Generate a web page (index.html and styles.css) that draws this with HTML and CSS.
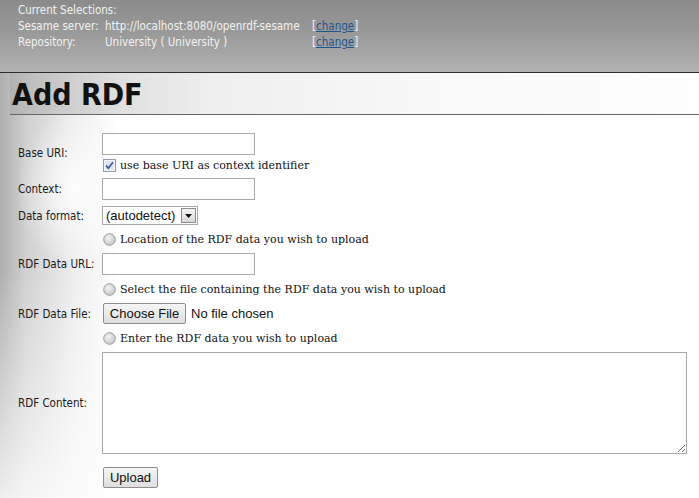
FILE: index.html
```html
<!DOCTYPE html>
<html>
<head>
    <meta charset="UTF-8">
    <title>Add RDF</title>
    <link rel="stylesheet" href="styles.css">
</head>
<body>
    <div class="header">
        <div class="selections">
            <div class="sel-title">Current Selections:</div>
            <div class="sel-label">Sesame server:</div>
            <div class="sel-value">http://localhost:8080/openrdf-sesame</div>
            <div class="sel-change">[<a href="#">change</a>]</div>
            <div class="sel-label">Repository:</div>
            <div class="sel-value">University ( University )</div>
            <div class="sel-change">[<a href="#">change</a>]</div>
        </div>
    </div>

    <div class="content">
        <h1 class="page-title">Add RDF</h1>

        <form class="upload-form">
            <div class="row row-base">
                <label class="field-label" for="baseURI">Base URI:</label>
                <div class="field-stack">
                    <input type="text" id="baseURI" class="text-input">
                    <label class="option option-check">
                        <svg class="check" width="13" height="13" viewBox="0 0 13 13">
                            <rect x="0.5" y="0.5" width="12" height="12" fill="#dfe6f2" stroke="#8f9bb0"/>
                            <rect x="1.5" y="1.5" width="10" height="10" fill="none" stroke="#f4f6fa"/>
                            <path d="M3 6.5 L5.3 9.2 L10 3.2" fill="none" stroke="#3c4fa0" stroke-width="1.6"/>
                        </svg>
                        use base URI as context identifier
                    </label>
                </div>
            </div>
            <div class="row">
                <label class="field-label" for="context">Context:</label>
                <input type="text" id="context" class="text-input">
            </div>
            <div class="row">
                <label class="field-label" for="dataFormat">Data format:</label>
                <div class="select-box">
                    <span class="select-text">(autodetect)</span>
                    <span class="select-arrow">
                        <svg width="7" height="4" viewBox="0 0 7 4"><path d="M0 0 H7 L3.5 4 Z" fill="#111"/></svg>
                    </span>
                </div>
            </div>
            <div class="row row-option">
                <span class="field-label"></span>
                <label class="option">
                    <svg class="radio" width="13" height="13" viewBox="0 0 13 13">
                        <defs>
                            <radialGradient id="rg" cx="0.4" cy="0.35" r="0.7">
                                <stop offset="0" stop-color="#f4f4f4"/>
                                <stop offset="1" stop-color="#c4c4c4"/>
                            </radialGradient>
                        </defs>
                        <circle cx="6.5" cy="6.5" r="5.8" fill="url(#rg)" stroke="#9a9a9a"/>
                    </svg>
                    Location of the RDF data you wish to upload
                </label>
            </div>
            <div class="row">
                <label class="field-label" for="dataURL">RDF Data URL:</label>
                <input type="text" id="dataURL" class="text-input">
            </div>
            <div class="row row-option">
                <span class="field-label"></span>
                <label class="option">
                    <svg class="radio" width="13" height="13" viewBox="0 0 13 13">
                        <circle cx="6.5" cy="6.5" r="5.8" fill="url(#rg)" stroke="#9a9a9a"/>
                    </svg>
                    Select the file containing the RDF data you wish to upload
                </label>
            </div>
            <div class="row">
                <span class="field-label">RDF Data File:</span>
                <button type="button" class="btn btn-file">Choose File</button>
                <span class="file-name">No file chosen</span>
            </div>
            <div class="row row-option">
                <span class="field-label"></span>
                <label class="option">
                    <svg class="radio" width="13" height="13" viewBox="0 0 13 13">
                        <circle cx="6.5" cy="6.5" r="5.8" fill="url(#rg)" stroke="#9a9a9a"/>
                    </svg>
                    Enter the RDF data you wish to upload
                </label>
            </div>
            <div class="row">
                <label class="field-label" for="content">RDF Content:</label>
                <textarea id="content" class="text-area"></textarea>
            </div>
            <div class="row row-submit">
                <span class="field-label"></span>
                <button type="button" class="btn btn-upload">Upload</button>
            </div>
        </form>
    </div>
</body>
</html>
```
FILE: styles.css
```css
body {
    margin: 0;
    font-family: "DejaVu Sans Condensed", "DejaVu Sans", sans-serif;
    font-size: 11.5px;
    background-color: #fff;
    color: #222;
}

/* Header with current selections */
.header {
    height: 72px;
    border-bottom: 1px solid #2e2e2e;
    background: linear-gradient(to bottom, #8b8b8b 0%, #999 45%, #b2b2b2 100%);
    color: #f2f2f2;
}

.selections {
    display: grid;
    grid-template-columns: 87px 207px auto;
    padding: 2px 0 0 18px;
    line-height: 16px;
}

.sel-title {
    grid-column: 1 / 4;
}

.sel-change a {
    color: #1d558f;
}

/* Main content */
.content {
    background:
        linear-gradient(to bottom, rgba(255,255,255,0) 0%, rgba(255,255,255,0) 45%, rgba(255,255,255,0.8) 100%),
        radial-gradient(ellipse 60px 80px at 75px 115px, rgba(255,255,255,0.9), rgba(255,255,255,0)),
        linear-gradient(to right, #adadad 0px, #cfcfcf 25px, #eeeeee 75px, #fff 120px);
    min-height: 425px;
}

.page-title {
    margin: 0 0 0 10px;
    padding: 0 0 0 2px;
    height: 41px;
    line-height: 44px;
    font-family: "DejaVu Sans Condensed", "DejaVu Sans", sans-serif;
    font-size: 30px;
    font-weight: bold;
    color: #111;
    border-bottom: 1px solid #666;
    background: linear-gradient(to right, rgba(170,170,170,0.6) 0, rgba(228,228,228,0.6) 200px, rgba(246,246,246,0.6) 450px, rgba(252,252,252,0.5) 100%);
}

.upload-form {
    padding: 15px 0 10px 18px;
}

.row {
    display: flex;
    align-items: center;
    padding: 3px 0;
}

.row-base {
    padding-bottom: 3px;
}

.field-stack {
    display: flex;
    flex-direction: column;
    gap: 3px;
}

.row-option {
    height: 16px;
}

.row-submit {
    padding-top: 10px;
}

.field-label {
    width: 84px;
    flex-shrink: 0;
    color: #1a1a1a;
}

.text-input {
    box-sizing: border-box;
    width: 153px;
    height: 22px;
    margin: 0;
    border: 1px solid #a9a9a9;
    background-color: #fff;
}

.text-area {
    box-sizing: border-box;
    width: 585px;
    height: 102px;
    margin: 0;
    border: 1px solid #a9a9a9;
    background-color: #fff;
    resize: both;
}

.option {
    display: flex;
    align-items: center;
    gap: 4px;
    padding-left: 1px;
    font-family: "DejaVu Serif", serif;
    font-size: 11px;
    color: #111;
}

.option-check {
    height: 14px;
}

.select-box {
    position: relative;
    box-sizing: border-box;
    width: 96px;
    height: 19px;
    border: 1px solid #a9a9a9;
    background-color: #fff;
    font-family: "Liberation Sans", Arial, sans-serif;
    font-size: 13px;
    line-height: 17px;
    color: #111;
}

.select-text {
    padding-left: 3px;
}

.select-arrow {
    position: absolute;
    top: 1px;
    right: 1px;
    box-sizing: border-box;
    width: 15px;
    height: 15px;
    display: flex;
    align-items: center;
    justify-content: center;
    border: 1px solid #8d8d8d;
    background: linear-gradient(to bottom, #f4f4f4, #d8d8d8);
}

.btn {
    margin: 0 0 0 1px;
    height: 21px;
    border: 1px solid #8e8e8e;
    border-radius: 2px;
    background: linear-gradient(to bottom, #f6f6f6, #dedede);
    font-family: "Liberation Sans", Arial, sans-serif;
    font-size: 13px;
    color: #111;
}

.btn-file {
    width: 83px;
    padding: 0;
}

.btn-upload {
    width: 55px;
    padding: 0;
}

.file-name {
    margin-left: 5px;
    font-family: "Liberation Sans", Arial, sans-serif;
    font-size: 13px;
    color: #111;
}
```
